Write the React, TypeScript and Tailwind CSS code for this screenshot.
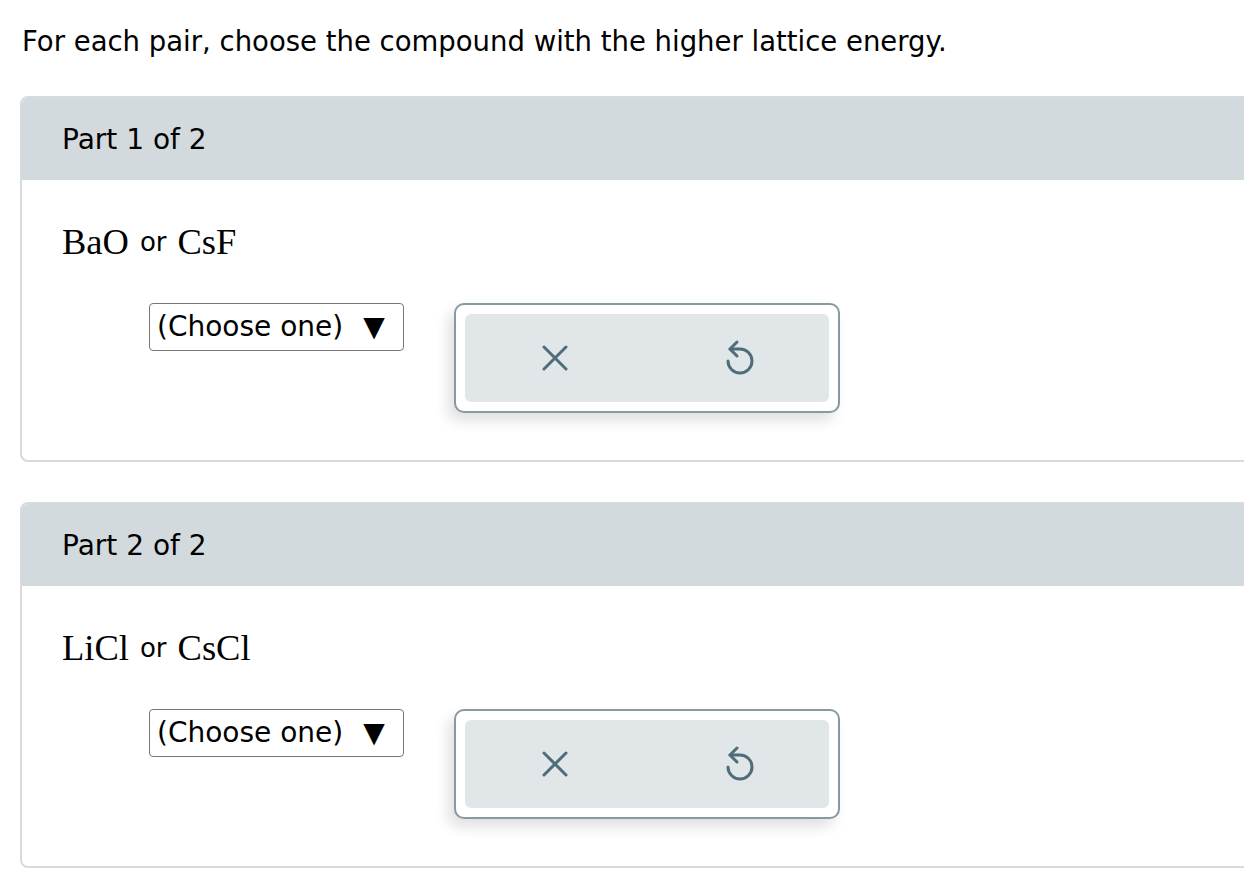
import React from "react";

function XIcon() {
  return (
    <svg width="26" height="26" viewBox="0 0 26 26" fill="none">
      <path d="M2 2 L24 24 M24 2 L2 24" stroke="#4e6d79" strokeWidth="3" strokeLinecap="round" />
    </svg>
  );
}

function UndoIcon() {
  return (
    <svg width="32" height="38" viewBox="0 0 32 38" fill="none">
      <path d="M7 11 H17 A12 12 0 1 1 5 23" stroke="#4e6d79" strokeWidth="3" strokeLinecap="round" strokeLinejoin="round" />
      <path d="M14 4 L7 11 L14 18" stroke="#4e6d79" strokeWidth="3" strokeLinecap="round" strokeLinejoin="round" />
    </svg>
  );
}

function Part({ title, children }: { title: string; children: React.ReactNode }) {
  return (
    <div className="ml-[20px] w-[1240px] border-2 border-[#d5dbdf] rounded-[8px] overflow-hidden">
      <div className="h-[82px] bg-[#d3dadd] flex items-center pl-[40px] pt-[2px] text-[28px]">{title}</div>
      <div className="pl-[40px] pt-[42px] pb-[47px]">
        <div className="h-[40px] flex items-center text-[26px]">{children}</div>
        <div className="mt-[41px] ml-[87px] flex items-start">
          <div className="w-[255px] h-[48px] border border-[#767676] rounded-[4px] bg-white flex items-center pl-[7px] text-[28px] leading-none">
            <span>(Choose one)</span>
            <span className="ml-[20px] text-[28px]">▼</span>
          </div>
          <div className="ml-[50px] w-[386px] h-[110px] border-2 border-[#869aa2] rounded-[10px] bg-white p-[9px] shadow-[-6px_8px_14px_rgba(0,0,0,0.12)]">
            <div className="w-full h-full bg-[#e1e6e9] rounded-[6px] flex">
              <div className="flex-1 flex items-center justify-center pr-[4px]">
                <XIcon />
              </div>
              <div className="flex-1 flex items-center justify-center pb-[2px]">
                <UndoIcon />
              </div>
            </div>
          </div>
        </div>
      </div>
    </div>
  );
}

export default function App() {
  return (
    <div className="min-h-screen bg-white text-black font-['DejaVu_Sans',Verdana,sans-serif] overflow-hidden">
      <p className="pl-[22px] pt-[22px] h-[96px] text-[27.5px] leading-[38px]">
        For each pair, choose the compound with the higher lattice energy.
      </p>
      <Part title="Part 1 of 2">
        <span className="font-['Liberation_Serif',serif] text-[36.5px]">BaO</span>
        <span className="mx-[11px] text-[26px]">or</span>
        <span className="font-['Liberation_Serif',serif] text-[36.5px]">CsF</span>
      </Part>
      <div className="h-[40px]" />
      <Part title="Part 2 of 2">
        <span className="font-['Liberation_Serif',serif] text-[36.5px]">LiCl</span>
        <span className="mx-[11px] text-[26px]">or</span>
        <span className="font-['Liberation_Serif',serif] text-[36.5px]">CsCl</span>
      </Part>
    </div>
  );
}
